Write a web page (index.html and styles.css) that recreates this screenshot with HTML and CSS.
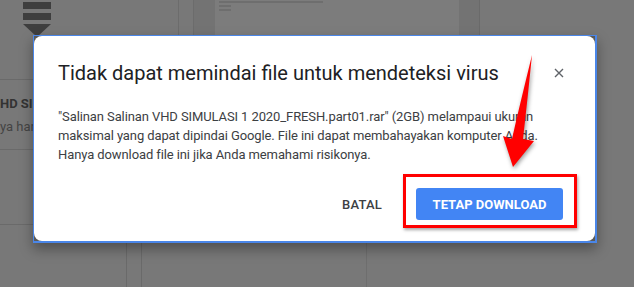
FILE: index.html
```html
<!DOCTYPE html>
<html lang="en">
<head>
  <meta charset="UTF-8">
  <meta name="viewport" content="width=device-width, initial-scale=1.0">
  <title>Google Drive - Peringatan virus</title>
  <link rel="stylesheet" href="styles.css">
</head>
<body>

<div class="page">
  <!-- dimmed drive page behind the dialog -->
  <div class="band-top">
    <div class="seg seg-a">
      <div class="zip-icon">
        <span class="bar"></span>
        <span class="bar"></span>
        <span class="tri"></span>
      </div>
    </div>
    <div class="seg seg-b"></div>
    <div class="seg seg-c"></div>
    <div class="seg seg-card">
      <div class="tiny-line long"></div>
      <div class="tiny-line short"></div>
      <div class="tiny-line shorter"></div>
    </div>
    <div class="seg seg-strip"></div>
    <div class="seg seg-rest"></div>
  </div>

  <div class="band-mid">
    <div class="side-list">
      <div class="side-row first"></div>
      <div class="side-row">
        <div class="side-title">HD SIMULASI</div>
        <div class="side-sub">ya hari ini</div>
      </div>
      <div class="side-row third"></div>
    </div>
  </div>

  <div class="band-bottom">
    <div class="seg bot-a"></div>
    <div class="seg bot-b"></div>
    <div class="seg bot-c"></div>
    <div class="seg bot-rest"></div>
  </div>
</div>

<!-- virus scan warning dialog -->
<div class="dialog-frame">
  <div class="dialog">
    <div class="dialog-head">
      <h1>Tidak dapat memindai file untuk mendeteksi virus</h1>
      <button class="close" type="button" aria-label="Tutup">
        <svg width="10" height="10" viewBox="0 0 10 10">
          <path d="M1 1 L9 9 M9 1 L1 9" stroke="#5f6368" stroke-width="1.4" fill="none"/>
        </svg>
      </button>
    </div>
    <p class="dialog-text">"Salinan Salinan VHD SIMULASI 1 2020_FRESH.part01.rar" (2GB) melampaui ukuran maksimal yang dapat dipindai Google. File ini dapat membahayakan komputer Anda. Hanya download file ini jika Anda memahami risikonya.</p>
    <div class="dialog-actions">
      <button class="btn-text" type="button">BATAL</button>
      <button class="btn-blue" type="button">TETAP DOWNLOAD</button>
    </div>
  </div>
</div>

<!-- red annotation -->
<div class="mark-box"></div>
<svg class="mark-arrow" width="634" height="287" viewBox="0 0 634 287">
  <path d="M532 55 C529 85 526 112 523 139 L534 141 L513 167 L503 136 L512 139 C518 112 525 84 532 55 Z" fill="#f00"/>
</svg>

</body>
</html>
```

FILE: styles.css
```css
body {
  margin: 0;
  padding: 0;
  width: 634px;
  height: 287px;
  overflow: hidden;
  font-family: Roboto, Arial, sans-serif;
  background-color: #787878;
  position: relative;
}

.page {
  height: 287px;
  display: grid;
  grid-template-rows: 35px 208px 44px;
}

.band-top,
.band-bottom {
  display: flex;
}

.band-mid {
  overflow: hidden;
}

.seg {
  height: 100%;
  box-sizing: border-box;
}

/* top band */
.seg-a {
  width: 179px;
  padding-left: 23px;
  border-right: 1px solid #6c6c6c;
}

.zip-icon {
  width: 28px;
  padding-top: 2px;
}

.zip-icon .bar {
  display: block;
  height: 7px;
  margin-bottom: 4px;
  background-color: #3e3e3e;
}

.zip-icon .tri {
  display: block;
  width: 0;
  height: 0;
  margin-top: 4px;
  border-left: 14px solid transparent;
  border-right: 14px solid transparent;
  border-top: 13px solid #3e3e3e;
}

.seg-b {
  width: 15px;
  border-right: 1px solid #6c6c6c;
}

.seg-c {
  width: 21px;
  background-color: #737373;
}

.seg-card {
  width: 244px;
  background-color: #7c7c7c;
  padding: 1px 0 0 4px;
}

.tiny-line {
  height: 2px;
  margin-bottom: 2px;
  background-color: #6e6e6e;
}

.tiny-line.long { width: 104px; }
.tiny-line.short { width: 12px; }
.tiny-line.shorter { width: 12px; }

.seg-strip {
  width: 21px;
  background-color: #737373;
  border-right: 1px solid #6a6a6a;
}

.seg-rest {
  flex: 1;
}

/* left list behind dialog */
.side-list {
  width: 33px;
  overflow: hidden;
}

.side-row {
  height: 70px;
  border-bottom: 1px solid #6a6a6a;
  box-sizing: border-box;
  white-space: nowrap;
  padding-top: 16px;
}

.side-row.first {
  height: 45px;
}

.side-row.third {
  height: 75px;
}

.side-title {
  font-size: 13px;
  font-weight: bold;
  color: #333333;
}

.side-sub {
  font-size: 13px;
  color: #444444;
  margin-top: 8px;
}

/* bottom band */
.bot-a {
  width: 127px;
  border-right: 1px solid #6a6a6a;
}

.bot-b {
  width: 15px;
  border-right: 1px solid #6a6a6a;
}

.bot-c {
  width: 225px;
  border-right: 1px solid #6e6e6e;
}

.bot-rest {
  flex: 1;
}

/* dialog */
.dialog-frame {
  position: absolute;
  left: 33px;
  top: 35px;
  width: 564px;
  height: 208px;
  box-sizing: border-box;
  border: 1px solid #4a86e8;
  border-right-width: 2px;
  border-bottom-width: 2px;
  background-color: #5a5a5a;
  box-shadow: 0 6px 12px rgba(0, 0, 0, 0.35);
}

.dialog {
  height: 100%;
  background-color: #ffffff;
  border-radius: 8px;
  padding: 0 24px;
  box-sizing: border-box;
}

.dialog-head {
  display: flex;
  align-items: center;
  justify-content: space-between;
  padding-top: 22px;
}

.dialog-head h1 {
  margin: 0;
  font-size: 20px;
  font-weight: normal;
  color: #202124;
  line-height: 30px;
}

.close {
  background: none;
  border: none;
  padding: 0;
  width: 10px;
  height: 10px;
  margin-right: 7px;
  display: flex;
}

.dialog-text {
  margin: 19px 0 0 0;
  font-size: 13px;
  line-height: 19px;
  letter-spacing: -0.1px;
  color: #3c4043;
}

.dialog-actions {
  display: flex;
  justify-content: flex-end;
  align-items: center;
  gap: 34px;
  margin-top: 24px;
  padding-right: 8px;
}

.btn-text {
  background: none;
  border: none;
  padding: 0;
  font-family: Roboto, Arial, sans-serif;
  font-size: 13px;
  font-weight: 500;
  color: #3c4043;
  letter-spacing: 0.2px;
}

.btn-blue {
  width: 147px;
  height: 32px;
  background-color: #4285f4;
  color: #ffffff;
  border: none;
  border-radius: 3px;
  font-family: Roboto, Arial, sans-serif;
  font-size: 13px;
  font-weight: bold;
  padding: 0;
}

/* annotation */
.mark-box {
  position: absolute;
  left: 403px;
  top: 174px;
  width: 174px;
  height: 54px;
  box-sizing: border-box;
  border: 3px solid #ff0000;
  box-shadow: 1px 2px 3px rgba(0, 0, 0, 0.35);
}

.mark-arrow {
  position: absolute;
  left: 0;
  top: 0;
  filter: drop-shadow(1px 2px 2px rgba(0, 0, 0, 0.4));
}
```
